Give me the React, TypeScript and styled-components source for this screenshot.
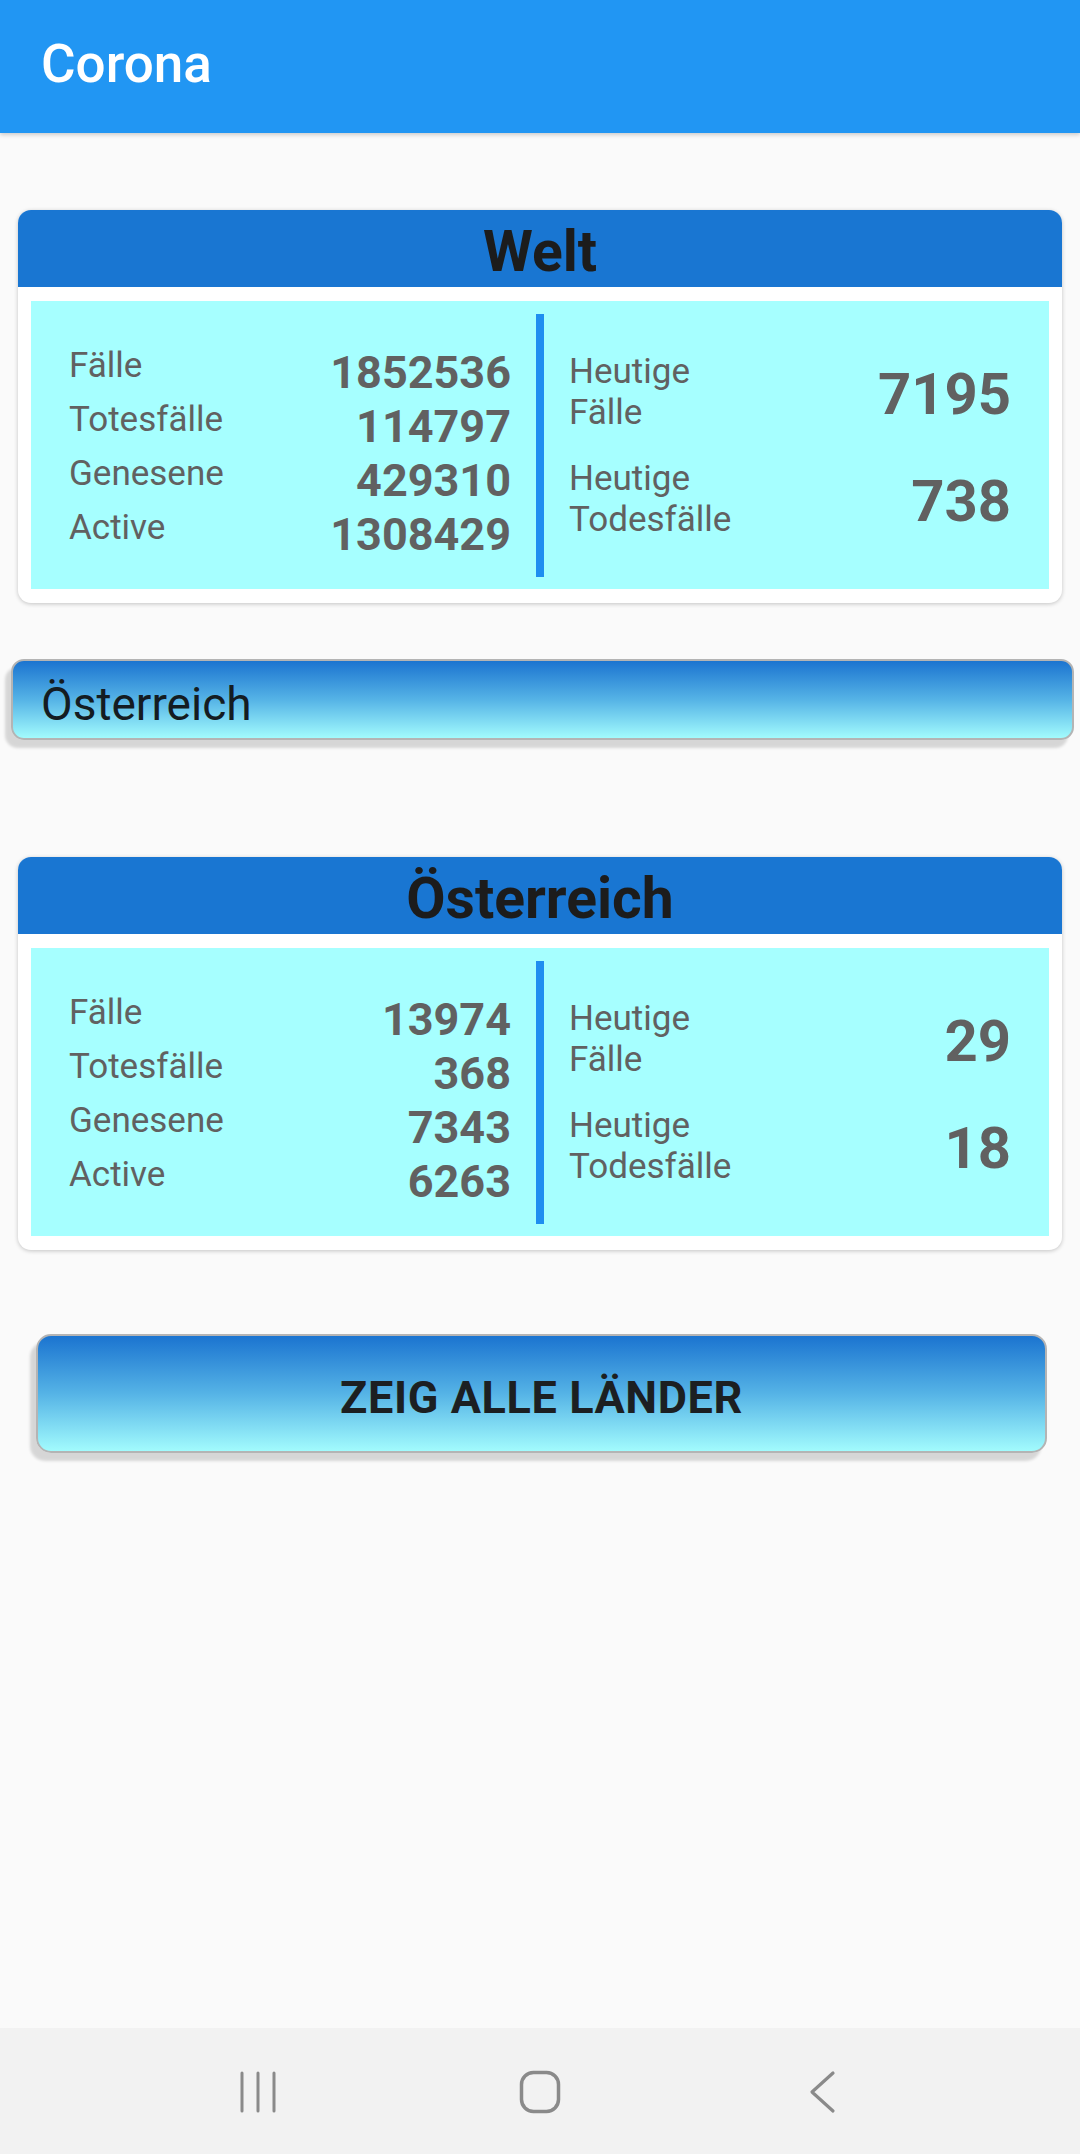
import React from "react";
import styled, { createGlobalStyle } from "styled-components";

const GlobalStyle = createGlobalStyle`
  html, body {
    margin: 0;
    padding: 0;
    background: #fafafa;
  }
  body {
    font-family: Roboto, "Noto Sans", "Liberation Sans", sans-serif;
  }
  * { box-sizing: border-box; }
`;

const Screen = styled.div`
  min-height: 2154px;
  display: flex;
  flex-direction: column;
  background: #fafafa;
`;

const AppBar = styled.header`
  height: 133px;
  background: #2196f3;
  padding: 33px 41px 0;
  box-shadow: 0 2px 4px rgba(0, 0, 0, 0.18);
  position: relative;
  z-index: 1;
`;

const AppTitle = styled.h1`
  margin: 0;
  font-size: 53px;
  font-weight: 500;
  line-height: normal;
  color: #ffffff;
`;

const Card = styled.section<{ $top: number }>`
  margin: ${(p) => p.$top}px 18px 0;
  background: #ffffff;
  border-radius: 13px;
  box-shadow: 0 1px 4px rgba(0, 0, 0, 0.22);
  padding-bottom: 14px;
  overflow: hidden;
`;

const CardHeader = styled.h2`
  margin: 0;
  height: 77px;
  padding-top: 8px;
  background: #1976d2;
  color: #1c1c1c;
  text-align: center;
  font-size: 57px;
  font-weight: 700;
  line-height: normal;
`;

const Stats = styled.div`
  margin: 14px 13px 0;
  background: #a6ffff;
  display: grid;
  grid-template-columns: 1fr 8px 1fr;
  padding: 13px 0 12px;
`;

const Divider = styled.div`
  background: #1e8ef0;
`;

const TotalsGrid = styled.div`
  display: grid;
  grid-template-columns: 1fr auto;
  grid-auto-rows: 54px;
  align-items: start;
  padding: 31px 25px 16px 38px;
`;

const Label = styled.div`
  font-size: 35px;
  line-height: 41px;
  color: #616161;
`;

const Total = styled.div`
  font-size: 45px;
  font-weight: 700;
  line-height: 54px;
  padding-top: 1px;
  color: #616161;
  text-align: right;
`;

const TodayColumn = styled.div`
  align-self: center;
  display: flex;
  flex-direction: column;
  gap: 25px;
  padding: 0 38px 0 25px;
`;

const TodayRow = styled.div`
  display: flex;
  align-items: center;
  justify-content: space-between;
`;

const TodayValue = styled.div`
  font-size: 58px;
  font-weight: 700;
  line-height: 58px;
  padding-top: 4px;
  color: #616161;
`;

const GradientBox = styled.div`
  background: linear-gradient(180deg, #1b74d0 0%, #55b3e6 50%, #a2fbfd 100%);
  border: 2px solid #b4b4b4;
  box-shadow: -6px 8px 3px rgba(0, 0, 0, 0.14);
`;

const Spinner = styled(GradientBox)`
  margin: 56px 6px 0 11px;
  height: 81px;
  border-radius: 13px;
  padding: 16px 0 0 28px;
  font-size: 46px;
  line-height: normal;
  color: #141c22;
`;

const ActionButton = styled(GradientBox)`
  margin: 84px 33px 0 36px;
  height: 119px;
  border-radius: 15px;
  padding-top: 35px;
  text-align: center;
  font-size: 45px;
  font-weight: 700;
  letter-spacing: 0.6px;
  line-height: normal;
  color: #1c1f22;
  text-transform: uppercase;
`;

const NavBar = styled.nav`
  margin-top: auto;
  height: 126px;
  background: #f2f2f2;
  display: grid;
  grid-template-columns: repeat(3, 1fr);
  align-items: center;
  padding-top: 2px;
`;

const NavSlot = styled.div<{ $shift: number }>`
  display: flex;
  justify-content: center;
  transform: translateX(${(p) => p.$shift}px);
`;

type StatsData = {
  title: string;
  totals: [string, string][];
  today: [string, string, string][];
};

const data: StatsData[] = [
  {
    title: "Welt",
    totals: [
      ["Fälle", "1852536"],
      ["Totesfälle", "114797"],
      ["Genesene", "429310"],
      ["Active", "1308429"],
    ],
    today: [
      ["Heutige", "Fälle", "7195"],
      ["Heutige", "Todesfälle", "738"],
    ],
  },
  {
    title: "Österreich",
    totals: [
      ["Fälle", "13974"],
      ["Totesfälle", "368"],
      ["Genesene", "7343"],
      ["Active", "6263"],
    ],
    today: [
      ["Heutige", "Fälle", "29"],
      ["Heutige", "Todesfälle", "18"],
    ],
  },
];

function StatsCard({ d, top }: { d: StatsData; top: number }) {
  return (
    <Card $top={top}>
      <CardHeader>{d.title}</CardHeader>
      <Stats>
        <TotalsGrid>
          {d.totals.map(([l, v]) => (
            <React.Fragment key={l}>
              <Label>{l}</Label>
              <Total>{v}</Total>
            </React.Fragment>
          ))}
        </TotalsGrid>
        <Divider />
        <TodayColumn>
          {d.today.map(([a, b, v]) => (
            <TodayRow key={b}>
              <Label>
                {a}
                <br />
                {b}
              </Label>
              <TodayValue>{v}</TodayValue>
            </TodayRow>
          ))}
        </TodayColumn>
      </Stats>
    </Card>
  );
}

const navStroke = "#8a8a8a";

export default function App() {
  return (
    <Screen>
      <GlobalStyle />
      <AppBar>
        <AppTitle>Corona</AppTitle>
      </AppBar>
      <StatsCard d={data[0]} top={77} />
      <Spinner>Österreich</Spinner>
      <StatsCard d={data[1]} top={117} />
      <ActionButton>Zeig alle Länder</ActionButton>
      <NavBar>
        <NavSlot $shift={78}>
          <svg width="40" height="42" viewBox="0 0 40 42">
            <g stroke={navStroke} strokeWidth="3" strokeLinecap="round">
              <line x1="4" y1="2" x2="4" y2="40" />
              <line x1="20" y1="2" x2="20" y2="40" />
              <line x1="36" y1="2" x2="36" y2="40" />
            </g>
          </svg>
        </NavSlot>
        <NavSlot $shift={0}>
          <svg width="42" height="44" viewBox="0 0 42 44">
            <rect x="2.5" y="2.5" width="37" height="39" rx="12" fill="none" stroke={navStroke} strokeWidth="3.5" />
          </svg>
        </NavSlot>
        <NavSlot $shift={-78}>
          <svg width="28" height="44" viewBox="0 0 28 44">
            <polyline points="25,3 4,22 25,41" fill="none" stroke={navStroke} strokeWidth="3.2" strokeLinecap="round" strokeLinejoin="round" />
          </svg>
        </NavSlot>
      </NavBar>
    </Screen>
  );
}
